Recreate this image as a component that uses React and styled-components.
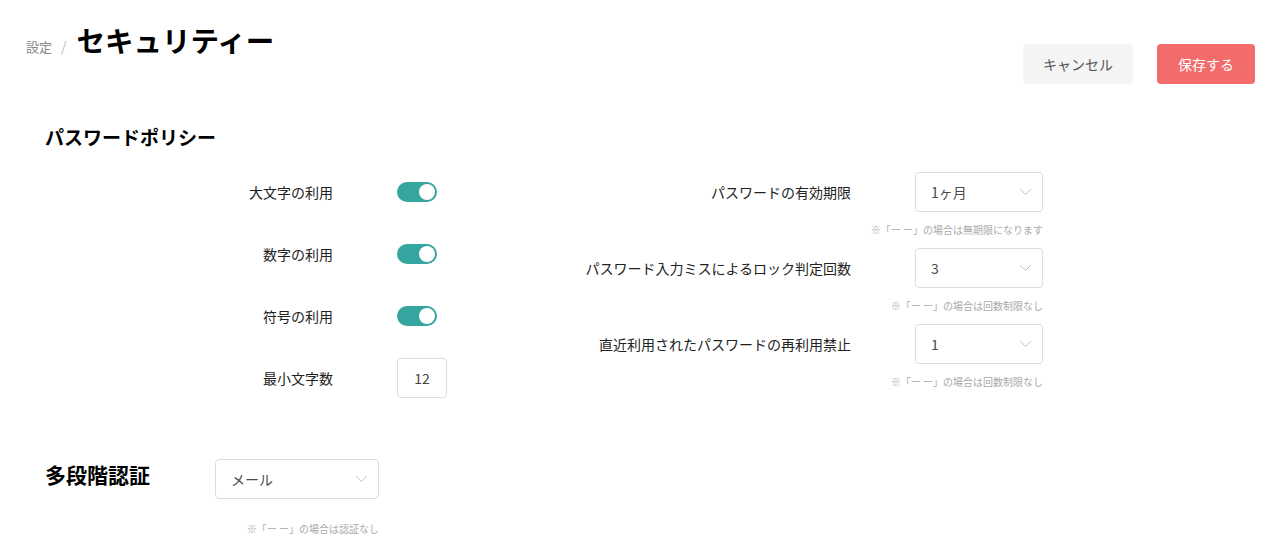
import React from 'react'
import styled, { createGlobalStyle } from 'styled-components'

const GlobalStyle = createGlobalStyle`
  body {
    margin: 0;
    background: #fff;
    font-family: "Noto Sans CJK JP", "Noto Sans", sans-serif;
    color: #222;
  }
`

const Page = styled.div`
  width: 1269px;
  min-height: 556px;
`

const Header = styled.header`
  display: flex;
  justify-content: space-between;
  align-items: flex-start;
  padding: 20px 14px 0 26px;
`

const Crumbs = styled.div`
  display: flex;
  align-items: baseline;
  height: 40px;
  line-height: 40px;
`

const Parent = styled.span`
  font-size: 13px;
  color: #888;
`

const Slash = styled.span`
  font-size: 14px;
  color: #bbb;
  margin: 0 10px 0 9px;
`

const Title = styled.h1`
  margin: 0;
  font-size: 28.5px;
  font-weight: 700;
  color: #000;
`

const Actions = styled.div`
  display: flex;
  gap: 24px;
  margin-top: 24px;
`

const Button = styled.button`
  height: 40px;
  width: ${p => p.$w}px;
  border: none;
  border-radius: 4px;
  font-family: inherit;
  font-size: 14px;
  cursor: pointer;
  background: ${p => (p.$primary ? '#f36c6c' : '#f4f4f4')};
  color: ${p => (p.$primary ? '#fff' : '#555')};
`

const Content = styled.main`
  padding-left: 45px;
`

const SectionTitle = styled.h2`
  margin: 40px 0 22px;
  font-size: 19px;
  line-height: 26px;
  font-weight: 700;
  color: #000;
`

const Panel = styled.div`
  display: grid;
  grid-template-columns: 506px auto;
  align-items: start;
`

const LeftGrid = styled.div`
  display: grid;
  grid-template-columns: 288px auto;
  grid-auto-rows: 40px;
  column-gap: 64px;
  row-gap: 22px;
  align-items: center;
`

const RightGrid = styled.div`
  display: grid;
  grid-template-columns: 300px 128px;
  column-gap: 64px;
  align-items: center;
`

const Label = styled.div`
  font-size: 14px;
  line-height: 38px;
  text-align: right;
  color: #222;
`

const Hint = styled.div`
  grid-column: 1 / -1;
  text-align: right;
  font-size: 10px;
  line-height: 16px;
  color: #aaa;
  margin: 10px 0 10px;
`

const Track = styled.div`
  width: 40px;
  height: 20px;
  border-radius: 10px;
  background: ${p => (p.$on ? '#35a59f' : '#ccc')};
  display: flex;
  align-items: center;
  justify-content: ${p => (p.$on ? 'flex-end' : 'flex-start')};
  padding: 0 2px;
  box-sizing: border-box;
`

const Knob = styled.span`
  width: 16px;
  height: 16px;
  border-radius: 50%;
  background: #fff;
`

const NumberBox = styled.div`
  width: 50px;
  height: 40px;
  box-sizing: border-box;
  border: 1px solid #dcdce0;
  border-radius: 4px;
  display: flex;
  align-items: center;
  justify-content: center;
  font-size: 14px;
  color: #444;
`

const SelectBox = styled.div`
  width: ${p => p.$w || 128}px;
  height: 40px;
  box-sizing: border-box;
  border: 1px solid #dcdce0;
  border-radius: 4px;
  display: flex;
  align-items: center;
  justify-content: space-between;
  padding: 0 10px 0 15px;
  font-size: 14px;
  color: #4a4a4a;
`

const Mfa = styled.section`
  display: flex;
  align-items: flex-start;
  margin-top: 59px;
`

const MfaTitle = styled.h2`
  margin: 0;
  width: 170px;
  font-size: 21px;
  line-height: 30px;
  font-weight: 700;
  color: #000;
`

const MfaField = styled.div`
  display: flex;
  flex-direction: column;
  align-items: flex-end;
`

const MfaHint = styled(Hint)`
  margin: 22px 0 0;
`

const Chevron = () => (
  <svg width="13" height="8" viewBox="0 0 13 8">
    <polyline points="1,1 6.5,6.5 12,1" fill="none" stroke="#c4c4c8" strokeWidth="1" />
  </svg>
)

const Toggle = ({ on }) => (
  <Track $on={on}>
    <Knob />
  </Track>
)

const Select = ({ value, w }) => (
  <SelectBox $w={w}>
    <span>{value}</span>
    <Chevron />
  </SelectBox>
)

const App = () => {
  return (
    <Page>
      <GlobalStyle />
      <Header>
        <Crumbs>
          <Parent>設定</Parent>
          <Slash>/</Slash>
          <Title>セキュリティー</Title>
        </Crumbs>
        <Actions>
          <Button $w={110}>キャンセル</Button>
          <Button $w={98} $primary>保存する</Button>
        </Actions>
      </Header>
      <Content>
        <SectionTitle>パスワードポリシー</SectionTitle>
        <Panel>
          <LeftGrid>
            <Label>大文字の利用</Label>
            <Toggle on />
            <Label>数字の利用</Label>
            <Toggle on />
            <Label>符号の利用</Label>
            <Toggle on />
            <Label>最小文字数</Label>
            <NumberBox>12</NumberBox>
          </LeftGrid>
          <RightGrid>
            <Label>パスワードの有効期限</Label>
            <Select value="1ヶ月" />
            <Hint>※「ー ー」の場合は無期限になります</Hint>
            <Label>パスワード入力ミスによるロック判定回数</Label>
            <Select value="3" />
            <Hint>※「ー ー」の場合は回数制限なし</Hint>
            <Label>直近利用されたパスワードの再利用禁止</Label>
            <Select value="1" />
            <Hint>※「ー ー」の場合は回数制限なし</Hint>
          </RightGrid>
        </Panel>
        <Mfa>
          <MfaTitle>多段階認証</MfaTitle>
          <MfaField>
            <Select value="メール" w={164} />
            <MfaHint>※「ー ー」の場合は認証なし</MfaHint>
          </MfaField>
        </Mfa>
      </Content>
    </Page>
  )
}

export default App
